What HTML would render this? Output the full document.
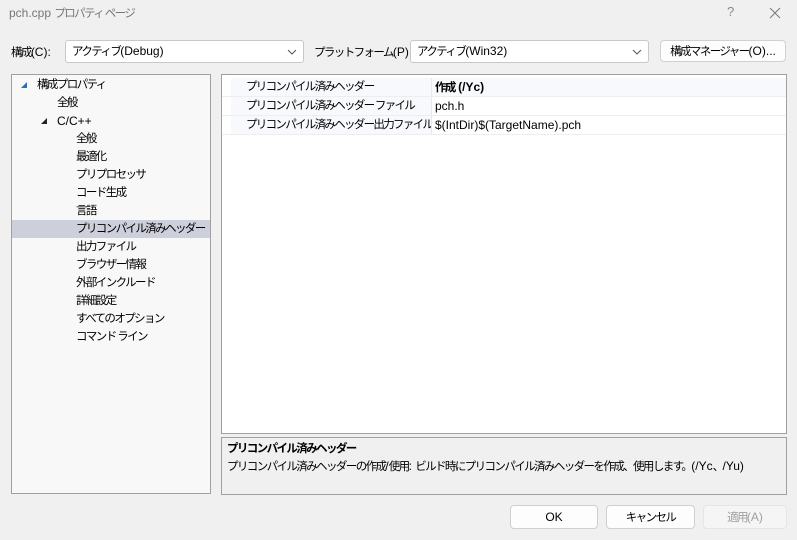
<!DOCTYPE html>
<html><head><meta charset="utf-8"><style>
*{box-sizing:border-box;margin:0;padding:0}
body{width:797px;height:540px;background:#f0f0f0;font-family:"Liberation Sans","Noto Sans CJK JP",sans-serif;font-size:12px;color:#000;position:relative;overflow:hidden}
.a{position:absolute;white-space:nowrap}
.j{font-size:11.5px;letter-spacing:-1.6px}
.l{font-size:12px;letter-spacing:0}
.combo{position:absolute;background:#fff;border:1px solid #c8c8c8;border-radius:3px;height:23px;line-height:21px;padding-left:6px;white-space:nowrap}
.combo svg{position:absolute;right:6px;top:8px}
.btn{position:absolute;background:#fdfdfd;border:1px solid #d0d0d0;border-radius:4px;text-align:center;height:24px;line-height:22px;white-space:nowrap}
.tree{position:absolute;left:11px;top:74px;width:200px;height:420px;background:#f8f8f8;border:1px solid #a0a0a0;font-size:11.5px;letter-spacing:-1.6px}
.tr{position:absolute;left:0;width:198px;height:18px;line-height:18px}
.grid{position:absolute;left:221px;top:74px;width:566px;height:360px;background:#fff;border:1px solid #a0a0a0}
.row{position:absolute;left:0;width:564px;height:19px;line-height:18px;white-space:nowrap}
.lab{position:absolute;left:9px;width:200px;height:18px;padding-left:15px;background:#f7f9fc;font-size:11.5px;letter-spacing:-1.7px;overflow:hidden}
.val{position:absolute;left:209px;width:355px;height:18px;padding-left:3px;border-left:1px solid #e8e8e8}
</style></head><body>
<div class="a" style="left:9px;top:5px;color:#777;font-size:12px">pch.cpp <span class="j">プロパティ ページ</span></div>
<div class="a" style="left:727px;top:4px;color:#888;font-size:13px">?</div>
<svg class="a" style="left:769px;top:7px" width="12" height="12"><path d="M1 1L11 11M11 1L1 11" stroke="#777" stroke-width="1"/></svg>

<div class="a" style="left:11px;top:44px"><span class="j">構成</span>(C):</div>
<div class="combo" style="left:65px;top:40px;width:239px"><span class="j">アクティブ</span>(Debug)<svg width="10" height="6"><path d="M1 1L5 5L9 1" fill="none" stroke="#555"/></svg></div>
<div class="a" style="left:314px;top:44px"><span class="j">プラットフォーム</span>(P):</div>
<div class="combo" style="left:410px;top:40px;width:239px"><span class="j">アクティブ</span>(Win32)<svg width="10" height="6"><path d="M1 1L5 5L9 1" fill="none" stroke="#555"/></svg></div>
<div class="btn" style="left:660px;top:40px;width:126px;height:22px;line-height:20px"><span class="j">構成マネージャー</span>(O)...</div>

<div class="tree">
<div class="tr" style="top:1px"><svg class="a" style="left:9px;top:6px" width="7" height="7"><path d="M6 0L6 6L0 6Z" fill="#2a6fb8"/></svg><span class="a" style="left:25px">構成プロパティ</span></div>
<div class="tr" style="top:19px"><span class="a" style="left:45px">全般</span></div>
<div class="tr" style="top:37px"><svg class="a" style="left:29px;top:6px" width="7" height="7"><path d="M6 0L6 6L0 6Z" fill="#222"/></svg><span class="a l" style="left:45px">C/C++</span></div>
<div class="tr" style="top:55px"><span class="a" style="left:64px">全般</span></div>
<div class="tr" style="top:73px"><span class="a" style="left:64px">最適化</span></div>
<div class="tr" style="top:91px"><span class="a" style="left:64px">プリプロセッサ</span></div>
<div class="tr" style="top:109px"><span class="a" style="left:64px">コード生成</span></div>
<div class="tr" style="top:127px"><span class="a" style="left:64px">言語</span></div>
<div class="tr" style="top:145px;background:#cdcfdb"><span class="a" style="left:64px">プリコンパイル済みヘッダー</span></div>
<div class="tr" style="top:163px"><span class="a" style="left:64px">出力ファイル</span></div>
<div class="tr" style="top:181px"><span class="a" style="left:64px">ブラウザー情報</span></div>
<div class="tr" style="top:199px"><span class="a" style="left:64px">外部インクルード</span></div>
<div class="tr" style="top:217px"><span class="a" style="left:64px">詳細設定</span></div>
<div class="tr" style="top:235px"><span class="a" style="left:64px">すべてのオプション</span></div>
<div class="tr" style="top:253px"><span class="a" style="left:64px">コマンド ライン</span></div>
</div>

<div class="grid">
<div class="row" style="top:3px;border-bottom:1px solid #eee"><div class="lab">プリコンパイル済みヘッダー</div><div class="val" style="font-weight:bold;background:#f7f9fc"><span class="j">作成</span> (/Yc)</div></div>
<div class="row" style="top:22px;border-bottom:1px solid #eee"><div class="lab">プリコンパイル済みヘッダー ファイル</div><div class="val">pch.h</div></div>
<div class="row" style="top:41px;border-bottom:1px solid #eee"><div class="lab">プリコンパイル済みヘッダー出力ファイル</div><div class="val">$(IntDir)$(TargetName).pch</div></div>
</div>

<div class="a" style="left:221px;top:437px;width:566px;height:58px;border:1px solid #a0a0a0;background:#f0f0f0"></div>
<div class="a j" style="left:227px;top:440px;font-weight:bold">プリコンパイル済みヘッダー</div>
<div class="a" style="left:227px;top:458px"><span class="j">プリコンパイル済みヘッダーの作成</span>/<span class="j">使用</span>: <span class="j">ビルド時にプリコンパイル済みヘッダーを作成、使用します。</span>(/Yc<span class="j">、</span>/Yu)</div>

<div class="btn" style="left:510px;top:505px;width:88px">OK</div>
<div class="btn" style="left:606px;top:505px;width:89px"><span class="j">キャンセル</span></div>
<div class="btn" style="left:703px;top:505px;width:84px;background:#f5f5f5;border-color:#e5e5e5;color:#a0a0a0"><span class="j">適用</span>(A)</div>
</body></html>
